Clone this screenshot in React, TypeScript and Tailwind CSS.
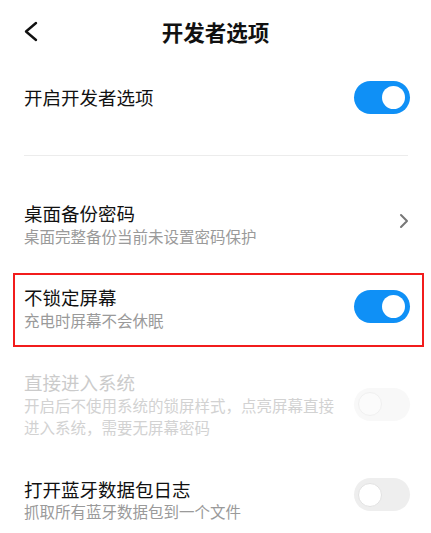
import React from "react";

const font = { fontFamily: '"Noto Sans CJK SC", "Noto Sans", sans-serif' };

function Toggle({ on, disabled, className = "" }: { on?: boolean; disabled?: boolean; className?: string }) {
  if (on) {
    return (
      <div className={`flex h-[33px] w-[56px] shrink-0 items-center justify-end rounded-full bg-[#0f90f6] px-[5px] ${className}`}>
        <div className="h-[23px] w-[23px] rounded-full bg-white" />
      </div>
    );
  }
  return (
    <div
      className={`flex h-[33px] w-[56px] shrink-0 items-center justify-start rounded-full px-[4px] ${
        disabled ? "bg-[#f8f8f8]" : "bg-[#eeeeee]"
      } ${className}`}
    >
      <div
        className={`h-[24px] w-[24px] rounded-full border ${
          disabled ? "border-[#f0f0f0] bg-[#fbfbfb]" : "border-[#e2e2e2] bg-white"
        }`}
      />
    </div>
  );
}

export default function App() {
  return (
    <div className="h-[533px] w-[431px] overflow-hidden bg-white" style={font}>
      {/* header */}
      <div className="relative flex h-[64px] items-center justify-center">
        <svg className="absolute left-[22px] top-[20px]" width="18" height="24" viewBox="0 0 18 24">
          <polyline points="14,3 4,11.5 14,20" fill="none" stroke="#111" strokeWidth="2.4" strokeLinecap="round" strokeLinejoin="round" />
        </svg>
        <h1 className="text-[21.5px] font-semibold text-[#111]">开发者选项</h1>
      </div>

      {/* enable developer options */}
      <div className="flex h-[66px] items-center justify-between pl-[24px] pr-[21px]">
        <span className="text-[18.5px] leading-[24px] text-[#111]">开启开发者选项</span>
        <Toggle on />
      </div>

      <div className="ml-[24px] mr-[23px] mt-[25px] h-px bg-[#ececec]" />

      {/* desktop backup password */}
      <div className="mt-[45px] flex items-center justify-between pl-[24px] pr-[21px]">
        <div>
          <div className="text-[18.5px] leading-[24px] text-[#111]">桌面备份密码</div>
          <div className="text-[15.5px] leading-[22px] text-[#9a9a9a]">桌面完整备份当前未设置密码保护</div>
        </div>
        <svg className="mb-[6px] mr-[1px]" width="10" height="16" viewBox="0 0 10 16">
          <polyline points="2,2 8,8 2,14" fill="none" stroke="#777" strokeWidth="2" strokeLinecap="round" strokeLinejoin="round" />
        </svg>
      </div>

      {/* keep screen unlocked - highlighted */}
      <div className="ml-[13px] mr-[7px] mt-[26px] flex items-center justify-between border-2 border-[#f21c1c] pb-[14px] pl-[9px] pr-[12px] pt-[10px]">
        <div>
          <div className="text-[18.5px] leading-[24px] text-[#111]">不锁定屏幕</div>
          <div className="text-[15.5px] leading-[22px] text-[#9a9a9a]">充电时屏幕不会休眠</div>
        </div>
        <Toggle on className="mb-[3px]" />
      </div>

      {/* direct into system - disabled */}
      <div className="mt-[23px] flex items-center justify-between pl-[24px] pr-[21px]">
        <div>
          <div className="text-[18.5px] leading-[24px] text-[#cbcbcb]">直接进入系统</div>
          <div className="text-[15.5px] leading-[22px] text-[#d2d2d2]">
            开启后不使用系统的锁屏样式，点亮屏幕直接
            <br />
            进入系统，需要无屏幕密码
          </div>
        </div>
        <Toggle disabled />
      </div>

      {/* bluetooth log */}
      <div className="mt-[39px] flex items-center justify-between pl-[24px] pr-[21px]">
        <div>
          <div className="text-[18.5px] leading-[24px] text-[#111]">打开蓝牙数据包日志</div>
          <div className="text-[15.5px] leading-[21px] text-[#9a9a9a]">抓取所有蓝牙数据包到一个文件</div>
        </div>
        <Toggle className="mb-[10px]" />
      </div>
    </div>
  );
}
